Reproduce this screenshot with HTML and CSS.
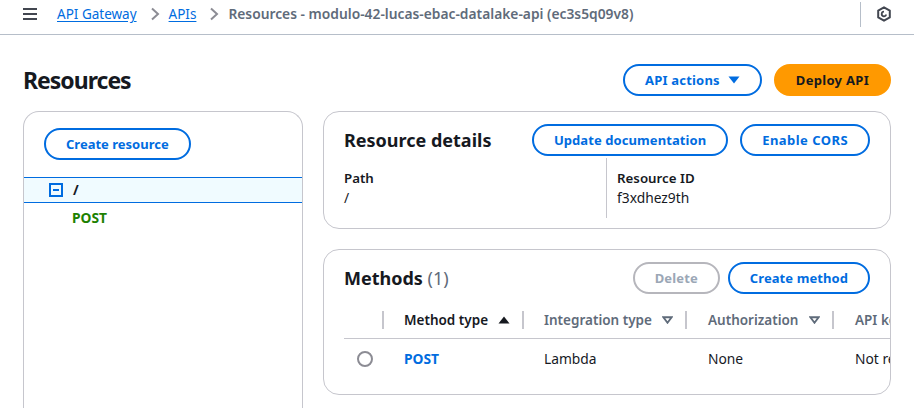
FILE: index.html
```html
<!DOCTYPE html>
<html lang="en">
<head>
<meta charset="utf-8">
<title>Resources</title>
<link rel="stylesheet" href="styles.css">
</head>
<body>
<header class="topbar">
  <svg class="menu-icon" width="16" height="14" viewBox="0 0 16 14"><path d="M1 2h14M1 7h14M1 12h14" fill="none" stroke="#424650" stroke-width="2"/></svg>
  <nav class="crumbs">
    <a class="crumb-link">API Gateway</a>
    <svg class="chev" width="10" height="14" viewBox="0 0 10 14"><path d="M2 1.5 8 7l-6 5.5" fill="none" stroke="#8c8c94" stroke-width="2"/></svg>
    <a class="crumb-link">APIs</a>
    <svg class="chev" width="10" height="14" viewBox="0 0 10 14"><path d="M2 1.5 8 7l-6 5.5" fill="none" stroke="#8c8c94" stroke-width="2"/></svg>
    <span class="crumb-current">Resources - modulo-42-lucas-ebac-datalake-api (ec3s5q09v8)</span>
  </nav>
  <div class="topbar-end">
    <svg width="16" height="16" viewBox="0 0 16 16"><path d="M8 1.3 13.8 4.6v6.8L8 14.7 2.2 11.4V4.6Z" fill="none" stroke="#424650" stroke-width="2" stroke-linejoin="round"/><path d="M8 4.8a3.2 3.2 0 1 0 3.1 4L8 8Z" fill="#424650"/><circle cx="8" cy="8" r="1.4" fill="#fff"/></svg>
  </div>
</header>

<main class="page">
  <div class="page-head">
    <h1 class="page-title">Resources</h1>
    <div class="actions">
      <button class="btn btn-wide btn-actions">API actions
        <svg width="12" height="8" viewBox="0 0 12 8"><path d="M0.5 0.5h11L6 7.5Z" fill="#006ce0"/></svg>
      </button>
      <button class="btn btn-deploy btn-primary">Deploy API</button>
    </div>
  </div>

  <div class="columns">
    <aside class="panel tree-panel">
      <div class="tree-top"><button class="btn">Create resource</button></div>
      <div class="tree-row">
        <svg width="14" height="14" viewBox="0 0 14 14"><rect x="1" y="1" width="12" height="12" fill="none" stroke="#006ce0" stroke-width="2"/><path d="M4 7h6" stroke="#006ce0" stroke-width="2"/></svg>
        <span class="tree-path">/</span>
      </div>
      <div class="tree-method">POST</div>
    </aside>

    <section class="details-col">
      <div class="panel details">
        <div class="panel-head">
          <h2 class="panel-title">Resource details</h2>
          <div class="actions">
            <button class="btn btn-slight">Update documentation</button>
            <button class="btn btn-wider">Enable CORS</button>
          </div>
        </div>
        <div class="detail-grid">
          <div class="detail-cell">
            <div class="detail-label">Path</div>
            <div class="detail-value">/</div>
          </div>
          <div class="detail-cell detail-cell-id">
            <div class="detail-label">Resource ID</div>
            <div class="detail-value">f3xdhez9th</div>
          </div>
        </div>
      </div>

      <div class="panel methods">
        <div class="panel-head">
          <h2 class="panel-title">Methods <span class="count">(1)</span></h2>
          <div class="actions actions-tight">
            <button class="btn btn-disabled">Delete</button>
            <button class="btn btn-slight">Create method</button>
          </div>
        </div>
        <div class="table">
          <div class="tr th-row">
            <div class="cell c-radio"></div>
            <div class="cell c-type sorted"><span>Method type</span><svg width="12" height="8" viewBox="0 0 12 8"><path d="M0.5 7.5h11L6 0.5Z" fill="#16191f"/></svg></div>
            <div class="cell c-int"><span>Integration type</span><svg width="11" height="8" viewBox="0 0 12 8"><path d="M1.5 1h9L6 7Z" fill="none" stroke="#5f6b7a" stroke-width="2"/></svg></div>
            <div class="cell c-auth"><span>Authorization</span><svg width="11" height="8" viewBox="0 0 12 8"><path d="M1.5 1h9L6 7Z" fill="none" stroke="#5f6b7a" stroke-width="2"/></svg></div>
            <div class="cell c-key"><span>API key</span></div>
          </div>
          <div class="tr td-row">
            <div class="cell c-radio"><span class="radio"></span></div>
            <div class="cell c-type"><a class="method-link">POST</a></div>
            <div class="cell c-int">Lambda</div>
            <div class="cell c-auth">None</div>
            <div class="cell c-key">Not required</div>
          </div>
        </div>
      </div>
    </section>
  </div>
</main>
</body>
</html>
```

FILE: styles.css
```css
* { box-sizing: border-box; }
html, body { margin: 0; height: 408px; overflow: hidden; }
body {
  background: #fff;
  color: #16191f;
  font-family: "Noto Sans", "Open Sans", sans-serif;
  font-size: 13.8px;
  line-height: 20px;
}
h1, h2 { margin: 0; }

.topbar {
  height: 35px;
  border-bottom: 1px solid #b6bec9;
  display: flex;
  align-items: center;
  padding: 0 22px 6px 22px;
}
.menu-icon { flex: none; }
.crumbs {
  display: flex;
  align-items: center;
  margin-left: 19px;
  font-size: 13.5px;
  white-space: nowrap;
}
.crumb-link { color: #006ce0; text-decoration: underline; text-underline-offset: 2px; }
.chev { margin: 0 9px 0 13px; }
.crumb-current { color: #5f6b7a; font-weight: 600; font-size: 13.8px; }
.topbar-end {
  margin-left: auto;
  height: 25px;
  border-left: 1px solid #b6bec9;
  padding-left: 15px;
  display: flex;
  align-items: center;
}

.page { padding: 28px 23px 0; }
.page-head { display: flex; justify-content: space-between; align-items: center; height: 33px; }
.page-title { font-size: 23px; line-height: 32px; font-weight: 700; letter-spacing: -1px; }
.actions { display: flex; gap: 12px; }
.actions-tight { gap: 8px; }

.btn {
  height: 32px;
  border: 2px solid #006ce0;
  border-radius: 16px;
  background: #fff;
  color: #006ce0;
  font: 700 13px/20px "Noto Sans", "Open Sans", sans-serif;
  padding: 0 20px;
  display: inline-flex;
  align-items: center;
  gap: 10px;
}
.btn-wide { letter-spacing: 0.2px; }
.btn-actions { gap: 8px; }
.btn-slight { letter-spacing: 0.08px; }
.btn-deploy { letter-spacing: 0.3px; }
.btn-wider { letter-spacing: 0.45px; }
.btn-primary { background: #ff9900; border-color: #ff9900; color: #16191f; }
.btn-disabled { border-color: #b6b6bc; color: #9ba7b6; letter-spacing: 0.15px; }

.columns { display: flex; gap: 20px; margin-top: 15px; align-items: flex-start; }
.panel { border: 1px solid #c6c6cd; border-radius: 16px; background: #fff; }

.tree-panel {
  width: 280px;
  height: 297px;
  flex: none;
  border-bottom: 0;
  border-radius: 16px 16px 0 0;
}
.tree-top { padding: 16px 20px 17px; }
.tree-row {
  height: 26px;
  background: #f0fbff;
  border-top: 1px solid #006ce0;
  border-bottom: 1px solid #006ce0;
  display: flex;
  align-items: center;
  gap: 10px;
  padding-left: 25px;
}
.tree-path { font-weight: 700; }
.tree-method { color: #1d8102; font-weight: 700; padding: 5px 0 0 48px; }

.details-col { width: 568px; display: flex; flex-direction: column; gap: 20px; }
.panel-head { display: flex; justify-content: space-between; align-items: center; padding: 12px 20px 0; }
.panel-title { font-size: 18px; line-height: 32px; font-weight: 700; }

.details { height: 118px; }
.detail-grid { display: grid; grid-template-columns: 262px 1fr; margin: 2px 0 0 20px; }
.detail-cell { height: 60px; padding-top: 10px; }
.detail-cell-id { border-left: 1px solid #c6c6cd; padding-left: 10px; }
.detail-label { font-weight: 600; font-size: 13.3px; }

.methods { height: 146px; overflow: hidden; }
.count { color: #5f6b7a; font-weight: 400; }

.table { margin: 13px 0 0 20px; overflow: hidden; }
.tr { display: flex; white-space: nowrap; }
.th-row { height: 32px; border-bottom: 1px solid #c6c6cd; font-weight: 600; font-size: 13.5px; color: #5f6b7a; }
.td-row { height: 40px; align-items: center; }
.cell { flex: none; display: flex; align-items: center; justify-content: space-between; height: 100%; padding-right: 12px; }
.th-row .cell { border-right: 2px solid #c6c6cd; height: 18px; margin-top: 4px; }
.th-row .c-key { border-right: 0; }
.c-radio { width: 40px; justify-content: center; padding: 0 0 0 2px; }
.th-row .c-radio { padding: 0; }
.c-type { width: 140px; padding-left: 20px; }
.sorted { color: #16191f; }
.c-int { width: 163px; padding-left: 20px; }
.c-auth { width: 147px; padding-left: 21px; }
.c-key { width: 110px; padding-left: 21px; }
.radio { width: 16px; height: 16px; border: 2px solid #8c8c94; border-radius: 50%; }
.method-link { color: #006ce0; font-weight: 700; }
```
